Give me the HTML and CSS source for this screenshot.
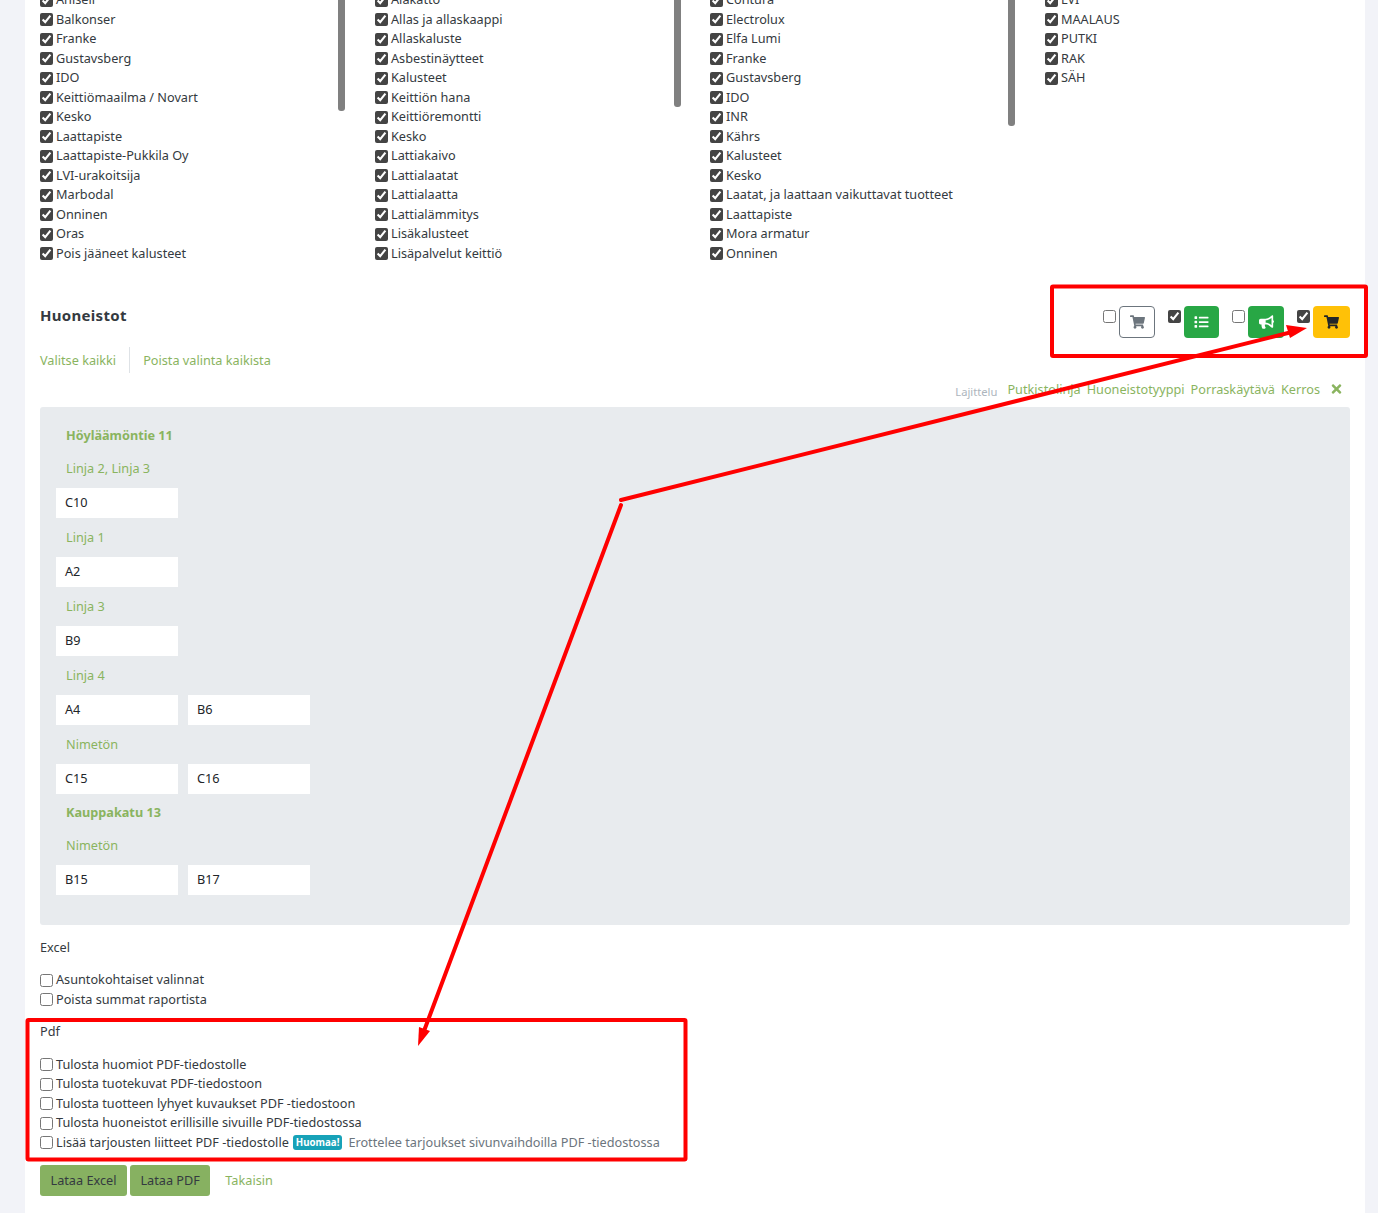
FILE: index.html
```html
<!DOCTYPE html>
<html lang="en">
<head>
    <meta charset="UTF-8">
    <meta name="viewport" content="width=device-width, initial-scale=1.0">
    <title>Huoneistot</title>
    <link rel="stylesheet" href="styles.css">
</head>
<body>
    <div class="page">
        <div class="filters">
            <div class="filter-col">
                <span class="thumb thumb-a"></span>
                <label class="check"><input type="checkbox" checked>Ahlsell</label>
                <label class="check"><input type="checkbox" checked>Balkonser</label>
                <label class="check"><input type="checkbox" checked>Franke</label>
                <label class="check"><input type="checkbox" checked>Gustavsberg</label>
                <label class="check"><input type="checkbox" checked>IDO</label>
                <label class="check"><input type="checkbox" checked>Keittiömaailma / Novart</label>
                <label class="check"><input type="checkbox" checked>Kesko</label>
                <label class="check"><input type="checkbox" checked>Laattapiste</label>
                <label class="check"><input type="checkbox" checked>Laattapiste-Pukkila Oy</label>
                <label class="check"><input type="checkbox" checked>LVI-urakoitsija</label>
                <label class="check"><input type="checkbox" checked>Marbodal</label>
                <label class="check"><input type="checkbox" checked>Onninen</label>
                <label class="check"><input type="checkbox" checked>Oras</label>
                <label class="check"><input type="checkbox" checked>Pois jääneet kalusteet</label>
            </div>
            <div class="filter-col">
                <span class="thumb thumb-b"></span>
                <label class="check"><input type="checkbox" checked>Alakatto</label>
                <label class="check"><input type="checkbox" checked>Allas ja allaskaappi</label>
                <label class="check"><input type="checkbox" checked>Allaskaluste</label>
                <label class="check"><input type="checkbox" checked>Asbestinäytteet</label>
                <label class="check"><input type="checkbox" checked>Kalusteet</label>
                <label class="check"><input type="checkbox" checked>Keittiön hana</label>
                <label class="check"><input type="checkbox" checked>Keittiöremontti</label>
                <label class="check"><input type="checkbox" checked>Kesko</label>
                <label class="check"><input type="checkbox" checked>Lattiakaivo</label>
                <label class="check"><input type="checkbox" checked>Lattialaatat</label>
                <label class="check"><input type="checkbox" checked>Lattialaatta</label>
                <label class="check"><input type="checkbox" checked>Lattialämmitys</label>
                <label class="check"><input type="checkbox" checked>Lisäkalusteet</label>
                <label class="check"><input type="checkbox" checked>Lisäpalvelut keittiö</label>
            </div>
            <div class="filter-col">
                <span class="thumb thumb-c"></span>
                <label class="check"><input type="checkbox" checked>Contura</label>
                <label class="check"><input type="checkbox" checked>Electrolux</label>
                <label class="check"><input type="checkbox" checked>Elfa Lumi</label>
                <label class="check"><input type="checkbox" checked>Franke</label>
                <label class="check"><input type="checkbox" checked>Gustavsberg</label>
                <label class="check"><input type="checkbox" checked>IDO</label>
                <label class="check"><input type="checkbox" checked>INR</label>
                <label class="check"><input type="checkbox" checked>Kährs</label>
                <label class="check"><input type="checkbox" checked>Kalusteet</label>
                <label class="check"><input type="checkbox" checked>Kesko</label>
                <label class="check"><input type="checkbox" checked>Laatat, ja laattaan vaikuttavat tuotteet</label>
                <label class="check"><input type="checkbox" checked>Laattapiste</label>
                <label class="check"><input type="checkbox" checked>Mora armatur</label>
                <label class="check"><input type="checkbox" checked>Onninen</label>
            </div>
            <div class="filter-col">
                <label class="check"><input type="checkbox" checked>LVI</label>
                <label class="check"><input type="checkbox" checked>MAALAUS</label>
                <label class="check"><input type="checkbox" checked>PUTKI</label>
                <label class="check"><input type="checkbox" checked>RAK</label>
                <label class="check"><input type="checkbox" checked>SÄH</label>
            </div>
        </div>

        <div class="section-head">
            <h2>Huoneistot</h2>
            <div class="toggles">
                <input type="checkbox">
                <a class="icon-btn btn-outline" href="#"><svg viewBox="0 0 576 512"><path d="M528.12 301.319l47.273-208C578.806 78.301 567.391 64 551.99 64H159.208l-9.166-44.81C147.758 8.021 137.93 0 126.529 0H24C10.745 0 0 10.745 0 24v16c0 13.255 10.745 24 24 24h69.883l70.248 343.435C147.325 417.1 136 435.222 136 456c0 30.928 25.072 56 56 56s56-25.072 56-56c0-15.674-6.447-29.835-16.824-40h209.647C430.447 426.165 424 440.326 424 456c0 30.928 25.072 56 56 56s56-25.072 56-56c0-22.172-12.888-41.332-31.579-50.405l5.517-24.276c3.413-15.018-8.002-29.319-23.403-29.319H218.117l-6.545-32h293.145c11.206 0 20.92-7.754 23.403-18.681z"/></svg></a>
                <input type="checkbox" checked>
                <a class="icon-btn btn-green btn-narrow" href="#"><svg viewBox="0 0 512 512"><path d="M80 368H16a16 16 0 0 0-16 16v64a16 16 0 0 0 16 16h64a16 16 0 0 0 16-16v-64a16 16 0 0 0-16-16zm0-320H16A16 16 0 0 0 0 64v64a16 16 0 0 0 16 16h64a16 16 0 0 0 16-16V64a16 16 0 0 0-16-16zm0 160H16a16 16 0 0 0-16 16v64a16 16 0 0 0 16 16h64a16 16 0 0 0 16-16v-64a16 16 0 0 0-16-16zm416 176H176a16 16 0 0 0-16 16v32a16 16 0 0 0 16 16h320a16 16 0 0 0 16-16v-32a16 16 0 0 0-16-16zm0-320H176a16 16 0 0 0-16 16v32a16 16 0 0 0 16 16h320a16 16 0 0 0 16-16V80a16 16 0 0 0-16-16zm0 160H176a16 16 0 0 0-16 16v32a16 16 0 0 0 16 16h320a16 16 0 0 0 16-16v-32a16 16 0 0 0-16-16z"/></svg></a>
                <input type="checkbox">
                <a class="icon-btn btn-green" href="#"><svg viewBox="0 0 576 512"><path d="M576 240c0-23.63-12.95-44.04-32-55.12V32.01C544 23.26 537.02 0 512 0c-7.12 0-14.19 2.38-19.98 7.02l-85.03 68.03C364.28 109.19 310.66 128 256 128H64c-35.35 0-64 28.65-64 64v96c0 35.35 28.65 64 64 64h33.7c-1.39 10.48-2.18 21.14-2.18 32 0 39.77 9.26 77.35 25.56 110.94 5.19 10.69 16.52 17.06 28.4 17.06h74.28c26.05 0 41.69-29.84 25.9-50.56-16.4-21.52-26.15-48.36-26.15-77.44 0-11.11 1.62-21.79 4.41-32H256c54.66 0 108.28 18.81 150.98 52.95l85.03 68.03a32.023 32.023 0 0 0 19.98 7.02c24.92 0 32-22.78 32-32V295.13C563.05 284.04 576 263.63 576 240zm-96 141.42l-33.05-26.44C392.95 311.78 325.12 288 256 288v-96c69.12 0 136.95-23.78 190.95-66.98L480 98.58v282.84z"/></svg></a>
                <input type="checkbox" checked>
                <a class="icon-btn btn-yellow" href="#"><svg viewBox="0 0 576 512"><path d="M528.12 301.319l47.273-208C578.806 78.301 567.391 64 551.99 64H159.208l-9.166-44.81C147.758 8.021 137.93 0 126.529 0H24C10.745 0 0 10.745 0 24v16c0 13.255 10.745 24 24 24h69.883l70.248 343.435C147.325 417.1 136 435.222 136 456c0 30.928 25.072 56 56 56s56-25.072 56-56c0-15.674-6.447-29.835-16.824-40h209.647C430.447 426.165 424 440.326 424 456c0 30.928 25.072 56 56 56s56-25.072 56-56c0-22.172-12.888-41.332-31.579-50.405l5.517-24.276c3.413-15.018-8.002-29.319-23.403-29.319H218.117l-6.545-32h293.145c11.206 0 20.92-7.754 23.403-18.681z"/></svg></a>
            </div>
        </div>

        <div class="select-links">
            <a href="#">Valitse kaikki</a>
            <a href="#">Poista valinta kaikista</a>
        </div>

        <div class="sort-row">
            <span class="sort-label">Lajittelu</span>
            <a href="#">Putkistolinja</a>
            <a href="#">Huoneistotyyppi</a>
            <a href="#">Porraskäytävä</a>
            <a href="#">Kerros</a>
            <a class="sort-clear" href="#"><svg viewBox="0 0 352 512"><path d="M242.72 256l100.07-100.07c12.28-12.28 12.28-32.19 0-44.48l-22.24-22.24c-12.28-12.28-32.19-12.28-44.48 0L176 189.28 75.93 89.21c-12.28-12.28-32.19-12.28-44.48 0L9.21 111.45c-12.28 12.28-12.28 32.19 0 44.48L109.28 256 9.21 356.07c-12.28 12.28-12.28 32.19 0 44.48l22.24 22.24c12.28 12.28 32.2 12.28 44.48 0L176 322.72l100.07 100.07c12.28 12.28 32.2 12.28 44.48 0l22.24-22.24c12.28-12.28 12.28-32.19 0-44.48L242.72 256z"/></svg></a>
        </div>

        <div class="apartments">
            <div class="building">Höyläämöntie 11</div>
            <div class="line-title">Linja 2, Linja 3</div>
            <div class="apt-row"><div class="apt">C10</div></div>
            <div class="line-title">Linja 1</div>
            <div class="apt-row"><div class="apt">A2</div></div>
            <div class="line-title">Linja 3</div>
            <div class="apt-row"><div class="apt">B9</div></div>
            <div class="line-title">Linja 4</div>
            <div class="apt-row"><div class="apt">A4</div><div class="apt">B6</div></div>
            <div class="line-title">Nimetön</div>
            <div class="apt-row"><div class="apt">C15</div><div class="apt">C16</div></div>
            <div class="building">Kauppakatu 13</div>
            <div class="line-title">Nimetön</div>
            <div class="apt-row"><div class="apt">B15</div><div class="apt">B17</div></div>
        </div>

        <div class="option-title">Excel</div>
        <div class="options">
            <label class="check"><input type="checkbox">Asuntokohtaiset valinnat</label>
            <label class="check"><input type="checkbox">Poista summat raportista</label>
        </div>

        <div class="option-title">Pdf</div>
        <div class="options options-pdf">
            <label class="check"><input type="checkbox">Tulosta huomiot PDF-tiedostolle</label>
            <label class="check"><input type="checkbox">Tulosta tuotekuvat PDF-tiedostoon</label>
            <label class="check"><input type="checkbox">Tulosta tuotteen lyhyet kuvaukset PDF -tiedostoon</label>
            <label class="check"><input type="checkbox">Tulosta huoneistot erillisille sivuille PDF-tiedostossa</label>
            <label class="check"><input type="checkbox">Lisää tarjousten liitteet PDF -tiedostolle<span class="badge">Huomaa!</span><span class="hint">Erottelee tarjoukset sivunvaihdoilla PDF -tiedostossa</span></label>
        </div>

        <div class="actions">
            <a class="btn" href="#">Lataa Excel</a>
            <a class="btn" href="#">Lataa PDF</a>
            <a class="back" href="#">Takaisin</a>
        </div>
    </div>

    <svg class="markup" viewBox="0 0 1378 1213">
        <rect class="markup-box" x="1052" y="286.5" width="314" height="69.5" rx="1"/>
        <rect class="markup-box" x="27.5" y="1020" width="658" height="139.5" rx="1"/>
        <line class="markup-line" x1="621" y1="500" x2="1292" y2="332"/>
        <polygon class="markup-head" points="1307,328 1286,325 1290,338"/>
        <line class="markup-line" x1="621" y1="505" x2="424" y2="1031"/>
        <polygon class="markup-head" points="418,1046 419,1027 430,1031"/>
    </svg>
</body>
</html>
```

FILE: styles.css
```css
html {
    height: 100%;
    overflow: hidden;
}
body {
    margin: 0;
    height: 1213px;
    overflow: hidden;
    position: relative;
    background-color: #f2f3f8;
    font-family: 'Noto Sans', 'Lato', sans-serif;
    font-size: 12.7px;
    line-height: 20px;
    color: #343a40;
}
a {
    color: #8ab45f;
    text-decoration: none;
}
input[type="checkbox"] {
    width: 13px;
    height: 13px;
    margin: 0;
    accent-color: #444;
    flex: none;
}
.page {
    margin: -10.5px 13px 0 25px;
    padding: 0 15px 40px;
    background-color: #fff;
}
.filters {
    display: grid;
    grid-template-columns: 335px 335px 335px 1fr;
}
.filter-col {
    position: relative;
}
.check {
    display: flex;
    align-items: center;
    height: 19.5px;
    gap: 3px;
    white-space: nowrap;
}
.check input {
    margin-top: 2px;
}
.thumb {
    position: absolute;
    top: 0;
    width: 7px;
    background-color: #808080;
    border-radius: 0 0 3px 3px;
}
.thumb-a {
    left: 298px;
    height: 121px;
}
.thumb-b {
    left: 299px;
    height: 117px;
}
.thumb-c {
    left: 298px;
    height: 136px;
}
.section-head {
    display: flex;
    justify-content: space-between;
    align-items: flex-start;
    margin-top: 43.5px;
}
.section-head h2 {
    margin: 0;
    font-size: 15px;
    line-height: 18px;
    font-weight: 700;
    letter-spacing: 0.3px;
}
.toggles {
    display: flex;
    align-items: flex-start;
}
.toggles input {
    margin: 4px 3px 0 0;
}
.icon-btn {
    display: flex;
    align-items: center;
    justify-content: center;
    width: 36px;
    height: 32px;
    margin-right: 13px;
    border-radius: 4px;
    box-sizing: border-box;
}
.btn-narrow {
    width: 35px;
}
.icon-btn:last-child {
    width: 37px;
    margin-right: 0;
}
.icon-btn svg {
    width: 15px;
    height: 14px;
}
.btn-outline {
    border: 1px solid #6c757d;
    fill: #6c757d;
}
.btn-green {
    background-color: #28a745;
    fill: #fff;
}
.btn-yellow {
    background-color: #ffc107;
    fill: #212529;
}
.select-links {
    display: flex;
    align-items: center;
    height: 26px;
    margin-top: 9px;
}
.select-links a:first-child {
    padding-right: 13px;
    line-height: 26px;
    border-right: 1px solid #dee2e6;
    margin-right: 13px;
}
.sort-row {
    display: flex;
    justify-content: flex-end;
    align-items: center;
    gap: 6px;
    height: 20px;
    margin: 6px 0 8px;
}
.sort-label {
    font-size: 11.2px;
    color: #adb5bd;
    padding-top: 5px;
    margin-right: 4px;
}
.sort-clear {
    display: flex;
    margin: 0 8px 0 5px;
    fill: #8ab45f;
}
.sort-clear svg {
    width: 11px;
    height: 14px;
}
.apartments {
    padding: 10px 16px 30px;
    background-color: #e8ebee;
    border-radius: 3px;
}
.building {
    height: 26px;
    padding: 6px 10px 0;
    line-height: 25px;
    font-weight: 700;
    color: #8ab45f;
}
.line-title {
    height: 39px;
    padding: 0 10px;
    line-height: 38px;
    color: #8ab45f;
}
.apt-row {
    display: flex;
    gap: 10px;
}
.apt {
    width: 122px;
    height: 30px;
    box-sizing: border-box;
    padding-left: 9px;
    line-height: 29px;
    background-color: #fff;
    color: #212529;
}
.option-title {
    margin-top: 12px;
}
.options {
    margin-top: 12.5px;
}
.options + .option-title {
    margin-top: 12.5px;
}
.options-pdf {
    margin-top: 13px;
}
.badge {
    margin: 2px 0 0 1px;
    padding: 0 3px;
    height: 15px;
    line-height: 15px;
    font-size: 9.7px;
    font-weight: 700;
    color: #fff;
    background-color: #17a2b8;
    border-radius: 3px;
}
.hint {
    margin-left: 3px;
    color: #6c757d;
}
.actions {
    display: flex;
    align-items: center;
    margin-top: 13.5px;
}
.btn {
    height: 31px;
    padding: 0 10.5px;
    margin-right: 3px;
    line-height: 31px;
    background-color: #87b161;
    color: #343a40;
    border-radius: 3px;
}
.back {
    margin-left: 12px;
    padding-bottom: 2px;
}
.markup {
    position: absolute;
    left: 0;
    top: 0;
    width: 1378px;
    height: 1213px;
    pointer-events: none;
}
.markup-box {
    fill: none;
    stroke: #f00;
    stroke-width: 4;
}
.markup-line {
    stroke: #f00;
    stroke-width: 4;
    stroke-linecap: round;
}
.markup-head {
    fill: #f00;
}
```
